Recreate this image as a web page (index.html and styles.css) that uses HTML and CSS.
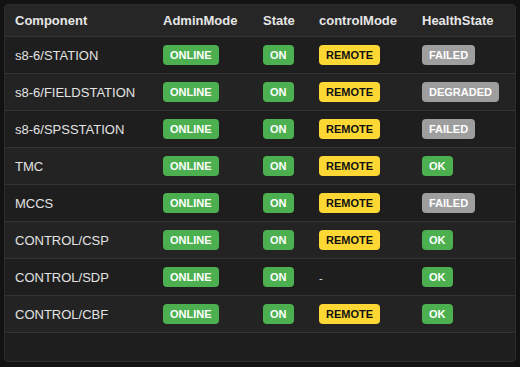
FILE: index.html
```html
<!DOCTYPE html>
<html>
<head>
<meta charset="utf-8">
<link rel="stylesheet" href="styles.css">
</head>
<body>
<div class="card">
  <table class="grid">
    <colgroup>
      <col class="c1"><col class="c2"><col class="c3"><col class="c4"><col class="c5">
    </colgroup>
    <thead>
      <tr><th>Component</th><th>AdminMode</th><th>State</th><th>controlMode</th><th>HealthState</th></tr>
    </thead>
    <tbody>
      <tr><td>s8-6/STATION</td><td><span class="b green">ONLINE</span></td><td><span class="b green">ON</span></td><td><span class="b yellow">REMOTE</span></td><td><span class="b grey">FAILED</span></td></tr>
      <tr><td>s8-6/FIELDSTATION</td><td><span class="b green">ONLINE</span></td><td><span class="b green">ON</span></td><td><span class="b yellow">REMOTE</span></td><td><span class="b grey">DEGRADED</span></td></tr>
      <tr><td>s8-6/SPSSTATION</td><td><span class="b green">ONLINE</span></td><td><span class="b green">ON</span></td><td><span class="b yellow">REMOTE</span></td><td><span class="b grey">FAILED</span></td></tr>
      <tr><td>TMC</td><td><span class="b green">ONLINE</span></td><td><span class="b green">ON</span></td><td><span class="b yellow">REMOTE</span></td><td><span class="b green">OK</span></td></tr>
      <tr><td>MCCS</td><td><span class="b green">ONLINE</span></td><td><span class="b green">ON</span></td><td><span class="b yellow">REMOTE</span></td><td><span class="b grey">FAILED</span></td></tr>
      <tr><td>CONTROL/CSP</td><td><span class="b green">ONLINE</span></td><td><span class="b green">ON</span></td><td><span class="b yellow">REMOTE</span></td><td><span class="b green">OK</span></td></tr>
      <tr><td>CONTROL/SDP</td><td><span class="b green">ONLINE</span></td><td><span class="b green">ON</span></td><td><span class="dash">-</span></td><td><span class="b green">OK</span></td></tr>
      <tr><td>CONTROL/CBF</td><td><span class="b green">ONLINE</span></td><td><span class="b green">ON</span></td><td><span class="b yellow">REMOTE</span></td><td><span class="b green">OK</span></td></tr>
    </tbody>
  </table>
</div>
</body>
</html>
```
FILE: styles.css
```css
html, body {
  margin: 0;
  background: #121212;
}
body {
  padding: 4px;
  font-family: "Liberation Sans", Arial, sans-serif;
  color: #e3e3e3;
}
.card {
  width: 510px;
  height: 356px;
  background: #1e1e1e;
  border: 1px solid #2c2c2c;
  border-radius: 4px;
  overflow: hidden;
}
.grid {
  width: 510px;
  border-collapse: collapse;
  table-layout: fixed;
}
.c1 { width: 148px; }
.c2 { width: 100px; }
.c3 { width: 56px; }
.c4 { width: 103px; }
.c5 { width: 103px; }
th {
  height: 31px;
  padding: 0 10px;
  text-align: left;
  font-size: 13px;
  font-weight: bold;
  color: #e6e6e6;
  background: #262626;
  border-bottom: 1px solid #333;
}
td {
  height: 36px;
  padding: 0 10px;
  font-size: 13px;
  color: #e3e3e3;
  border-bottom: 1px solid #333;
  vertical-align: middle;
  white-space: nowrap;
}
tbody tr:nth-child(even) td { background: #232323; }
.b {
  display: inline-block;
  height: 20px;
  line-height: 20px;
  padding: 0 7px;
  border-radius: 4px;
  font-size: 11px;
  font-weight: bold;
}
.green { background: #4caf50; color: #fff; }
.yellow { background: #fdd835; color: #111; }
.grey { background: #9e9e9e; color: #fff; }
.dash { font-size: 11px; color: #e3e3e3; }
```
